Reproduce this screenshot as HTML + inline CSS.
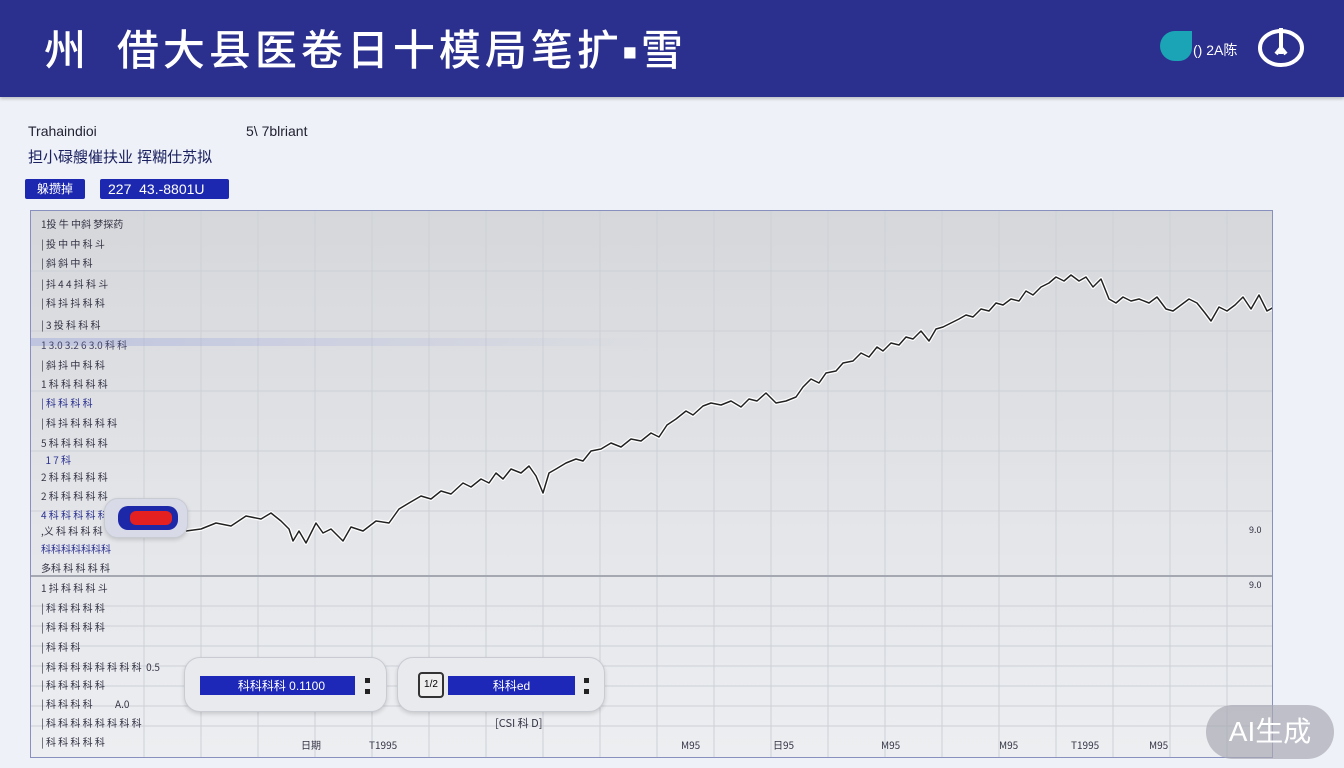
<!DOCTYPE html>
<html><head><meta charset="utf-8"><style>
*{margin:0;padding:0;box-sizing:border-box}
body{width:1344px;height:768px;overflow:hidden;background:#eef1f7;font-family:"Liberation Sans","Noto Sans CJK SC",sans-serif;position:relative}
.hdr{position:absolute;left:0;top:0;width:1344px;height:97px;background:#2b2f8e;box-shadow:0 2px 3px rgba(0,0,0,.2)}
.title{position:absolute;left:44px;top:22px;color:#fff;font-size:42px;font-weight:500;letter-spacing:4px;font-family:"Noto Sans CJK SC",sans-serif;line-height:52px}
.t{position:absolute;font-size:13px;color:#223;white-space:nowrap}
.panel{position:absolute;left:30px;top:210px;width:1243px;height:548px;border:1px solid #8890c0;background:linear-gradient(#d5d7db,#e4e6ea 60%,#eceef1);overflow:hidden}
.lab{position:absolute;left:10px;font-size:10px;color:#334;white-space:nowrap;font-family:"Noto Sans CJK SC",sans-serif}
.btn{position:absolute;border-radius:12px;background:#e9eaee;border:1px solid #c9cbd3;box-shadow:0 2px 4px rgba(0,0,0,.15)}
.bar{position:absolute;background:#1d28b8;color:#fff;font-size:12px;line-height:20px;text-align:center}
</style></head><body>
<div class="hdr">
<div class="title">州&nbsp;&nbsp;借大县医卷日十模局笔扩<span style="font-size:14px;vertical-align:middle">■</span>雪</div>
<div style="position:absolute;left:1160px;top:31px;width:32px;height:30px;background:#1aa4b6;border-radius:16px 0 14px 16px"></div>
<div style="position:absolute;left:1193px;top:40px;color:#fff;font-size:14px">() 2A陈</div>
<svg style="position:absolute;left:1256px;top:24px" width="50" height="44" viewBox="0 0 50 44"><ellipse cx="25" cy="24" rx="21" ry="17" fill="none" stroke="#fff" stroke-width="4"/><path d="M25 4 V30 M20 30 L25 24 L30 30" stroke="#fff" stroke-width="4" fill="none"/></svg>
</div>
<div class="t" style="left:28px;top:123px;font-size:14px">Trahaindioi</div>
<div class="t" style="left:246px;top:123px;font-size:14px">5\ 7blriant</div>
<div class="t" style="left:28px;top:146px;font-size:15px;color:#1a2060">担小碌艘催扶业 挥糊仕苏拟</div>
<div style="position:absolute;left:25px;top:179px;width:60px;height:20px;background:#1d28b0;border-radius:2px;color:#fff;font-size:12px;line-height:20px;text-align:center">躲攒掉</div>
<div style="position:absolute;left:100px;top:179px;width:129px;height:20px;background:#1d28b0;border-radius:2px;color:#fff;font-size:14px;line-height:20px;padding-left:8px">227&nbsp;&nbsp;43.-8801U</div>
<div class="panel">
<svg style="position:absolute;left:0;top:0" width="1243" height="548">
<g stroke="#cdd0d6" stroke-width="1">
<line x1="113" y1="0" x2="113" y2="548"/><line x1="170" y1="0" x2="170" y2="548"/><line x1="227" y1="0" x2="227" y2="548"/><line x1="284" y1="0" x2="284" y2="548"/><line x1="341" y1="0" x2="341" y2="548"/><line x1="398" y1="0" x2="398" y2="548"/><line x1="455" y1="0" x2="455" y2="548"/><line x1="512" y1="0" x2="512" y2="548"/><line x1="569" y1="0" x2="569" y2="548"/><line x1="626" y1="0" x2="626" y2="548"/><line x1="683" y1="0" x2="683" y2="548"/><line x1="740" y1="0" x2="740" y2="548"/><line x1="797" y1="0" x2="797" y2="548"/><line x1="854" y1="0" x2="854" y2="548"/><line x1="911" y1="0" x2="911" y2="548"/><line x1="968" y1="0" x2="968" y2="548"/><line x1="1025" y1="0" x2="1025" y2="548"/><line x1="1082" y1="0" x2="1082" y2="548"/><line x1="1139" y1="0" x2="1139" y2="548"/><line x1="1196" y1="0" x2="1196" y2="548"/>
<line x1="0" y1="60" x2="1243" y2="60"/><line x1="0" y1="120" x2="1243" y2="120"/><line x1="0" y1="180" x2="1243" y2="180"/><line x1="0" y1="240" x2="1243" y2="240"/><line x1="0" y1="300" x2="1243" y2="300"/><line x1="0" y1="395" x2="1243" y2="395"/><line x1="0" y1="415" x2="1243" y2="415"/><line x1="0" y1="435" x2="1243" y2="435"/><line x1="0" y1="455" x2="1243" y2="455"/><line x1="0" y1="475" x2="1243" y2="475"/><line x1="0" y1="495" x2="1243" y2="495"/><line x1="0" y1="515" x2="1243" y2="515"/>
</g>
<line x1="0" y1="365" x2="1243" y2="365" stroke="#a5a8b0" stroke-width="2"/>
<polyline fill="none" stroke="#fff" stroke-width="4" stroke-linejoin="round" points="155,320 170,318 185,312 200,315 215,305 230,308 240,302 250,310 258,318 262,330 268,320 275,332 285,312 292,322 300,318 312,330 320,316 332,320 345,310 358,312 368,298 378,292 390,285 400,288 410,280 420,283 432,272 440,276 450,268 458,272 465,262 472,268 480,258 490,262 498,255 505,265 512,282 518,262 525,258 535,252 545,248 552,250 560,240 570,238 580,232 590,236 600,228 610,230 620,222 628,226 636,214 645,208 655,200 662,204 672,195 680,192 690,194 700,190 710,196 718,188 726,190 735,182 745,192 755,190 765,186 772,176 780,168 788,172 795,162 805,160 812,152 822,150 830,142 838,146 846,136 852,140 860,132 868,134 875,126 882,128 890,120 898,130 905,118 912,116 920,112 928,108 935,104 942,106 950,98 958,100 965,92 972,94 980,88 988,90 995,80 1002,84 1010,76 1018,72 1025,66 1033,70 1040,64 1048,70 1055,66 1062,76 1070,68 1078,88 1085,92 1092,86 1100,90 1108,88 1118,92 1126,86 1135,98 1142,100 1150,94 1158,88 1166,92 1174,102 1180,110 1188,96 1196,100 1204,94 1212,86 1220,98 1228,84 1236,100 1243,96"/>
<polyline fill="none" stroke="#222" stroke-width="1.5" stroke-linejoin="round" points="155,320 170,318 185,312 200,315 215,305 230,308 240,302 250,310 258,318 262,330 268,320 275,332 285,312 292,322 300,318 312,330 320,316 332,320 345,310 358,312 368,298 378,292 390,285 400,288 410,280 420,283 432,272 440,276 450,268 458,272 465,262 472,268 480,258 490,262 498,255 505,265 512,282 518,262 525,258 535,252 545,248 552,250 560,240 570,238 580,232 590,236 600,228 610,230 620,222 628,226 636,214 645,208 655,200 662,204 672,195 680,192 690,194 700,190 710,196 718,188 726,190 735,182 745,192 755,190 765,186 772,176 780,168 788,172 795,162 805,160 812,152 822,150 830,142 838,146 846,136 852,140 860,132 868,134 875,126 882,128 890,120 898,130 905,118 912,116 920,112 928,108 935,104 942,106 950,98 958,100 965,92 972,94 980,88 988,90 995,80 1002,84 1010,76 1018,72 1025,66 1033,70 1040,64 1048,70 1055,66 1062,76 1070,68 1078,88 1085,92 1092,86 1100,90 1108,88 1118,92 1126,86 1135,98 1142,100 1150,94 1158,88 1166,92 1174,102 1180,110 1188,96 1196,100 1204,94 1212,86 1220,98 1228,84 1236,100 1243,96"/>
</svg>
<div style="position:absolute;left:0;top:127px;width:620px;height:8px;background:linear-gradient(90deg,rgba(150,160,220,.4),rgba(150,160,220,0))"></div>
<div class="lab" style="top:5px">1投 牛 中斜 梦探药</div>
<div class="lab" style="top:25px">| 投 中 中 科 斗</div>
<div class="lab" style="top:44px">| 斜 斜 中 科</div>
<div class="lab" style="top:65px">| 抖 4 4 抖 科 斗</div>
<div class="lab" style="top:84px">| 科 抖 抖 科 科</div>
<div class="lab" style="top:106px">| 3 投 科 科 科</div>
<div class="lab" style="top:126px;color:#446">1 3.0 3.2 6 3.0 科 科</div>
<div class="lab" style="top:146px">| 斜 抖 中 科 科</div>
<div class="lab" style="top:165px">1 科 科 科 科 科</div>
<div class="lab" style="top:184px;color:#2a3090">| 科 科 科 科</div>
<div class="lab" style="top:204px">| 科 抖 科 科 科 科</div>
<div class="lab" style="top:224px">5 科 科 科 科 科</div>
<div class="lab" style="top:241px;color:#2a3090">&nbsp;&nbsp;1 7 科</div>
<div class="lab" style="top:258px">2 科 科 科 科 科</div>
<div class="lab" style="top:277px">2 科 科 科 科 科</div>
<div class="lab" style="top:296px;color:#2a3090">4 科 科 科 科 科</div>
<div class="lab" style="top:312px">,义 科 科 科 科</div>
<div class="lab" style="top:330px;color:#2a3090">科科科科科科科</div>
<div class="lab" style="top:349px">多科 科 科 科 科</div>
<div class="lab" style="top:369px">1 抖 科 科 科 斗</div>
<div class="lab" style="top:389px">| 科 科 科 科 科</div>
<div class="lab" style="top:408px">| 科 科 科 科 科</div>
<div class="lab" style="top:428px">| 科 科 科</div>
<div class="lab" style="top:448px">| 科 科 科 科 科 科 科 科 &nbsp;0.5</div>
<div class="lab" style="top:466px">| 科 科 科 科 科</div>
<div class="lab" style="top:485px">| 科 科 科 科 &nbsp;&nbsp;&nbsp;&nbsp;&nbsp;&nbsp;&nbsp;&nbsp;&nbsp;A.0</div>
<div class="lab" style="top:504px">| 科 科 科 科 科 科 科 科</div>
<div class="lab" style="top:523px">| 科 科 科 科 科</div>
<div class="lab" style="left:1218px;top:312px;font-size:9px">9.0</div>
<div class="lab" style="left:1218px;top:367px;font-size:9px">9.0</div>
<div class="lab" style="left:464px;top:504px;font-size:11px">[CSI 科 D]</div>
<div class="lab" style="left:270px;top:526px">日期</div><div class="lab" style="left:338px;top:526px">T1995</div><div class="lab" style="left:650px;top:526px">M95</div><div class="lab" style="left:742px;top:526px">日95</div><div class="lab" style="left:850px;top:526px">M95</div><div class="lab" style="left:968px;top:526px">M95</div><div class="lab" style="left:1040px;top:526px">T1995</div><div class="lab" style="left:1118px;top:526px">M95</div>
</div>
<div class="btn" style="left:104px;top:498px;width:84px;height:40px;border-radius:14px;background:#d8dae8"></div>
<div style="position:absolute;left:118px;top:506px;width:60px;height:24px;border-radius:10px;background:#1d28a8"></div>
<div style="position:absolute;left:130px;top:511px;width:42px;height:14px;border-radius:6px;background:#e52020"></div>
<div class="btn" style="left:184px;top:657px;width:203px;height:55px;border-radius:16px"></div>
<div class="bar" style="left:200px;top:676px;width:155px;height:19px;text-align:right;padding-right:30px">科科科科 0.1100</div>
<div style="position:absolute;left:365px;top:678px;width:5px;height:16px;border-top:5px solid #222;border-bottom:5px solid #222"></div>
<div class="btn" style="left:397px;top:657px;width:208px;height:55px;border-radius:16px"></div>
<div style="position:absolute;left:418px;top:672px;width:26px;height:26px;border:2px solid #333;border-radius:4px;background:#eee;font-size:10px;text-align:center;line-height:22px">1/2</div>
<div class="bar" style="left:448px;top:676px;width:127px;height:19px">科科ed</div>
<div style="position:absolute;left:584px;top:678px;width:5px;height:16px;border-top:5px solid #222;border-bottom:5px solid #222"></div>
<div style="position:absolute;left:1206px;top:705px;width:128px;height:54px;border-radius:27px;background:rgba(170,170,180,.7);color:#fff;font-size:28px;line-height:54px;text-align:center">AI生成</div>
</body></html>
